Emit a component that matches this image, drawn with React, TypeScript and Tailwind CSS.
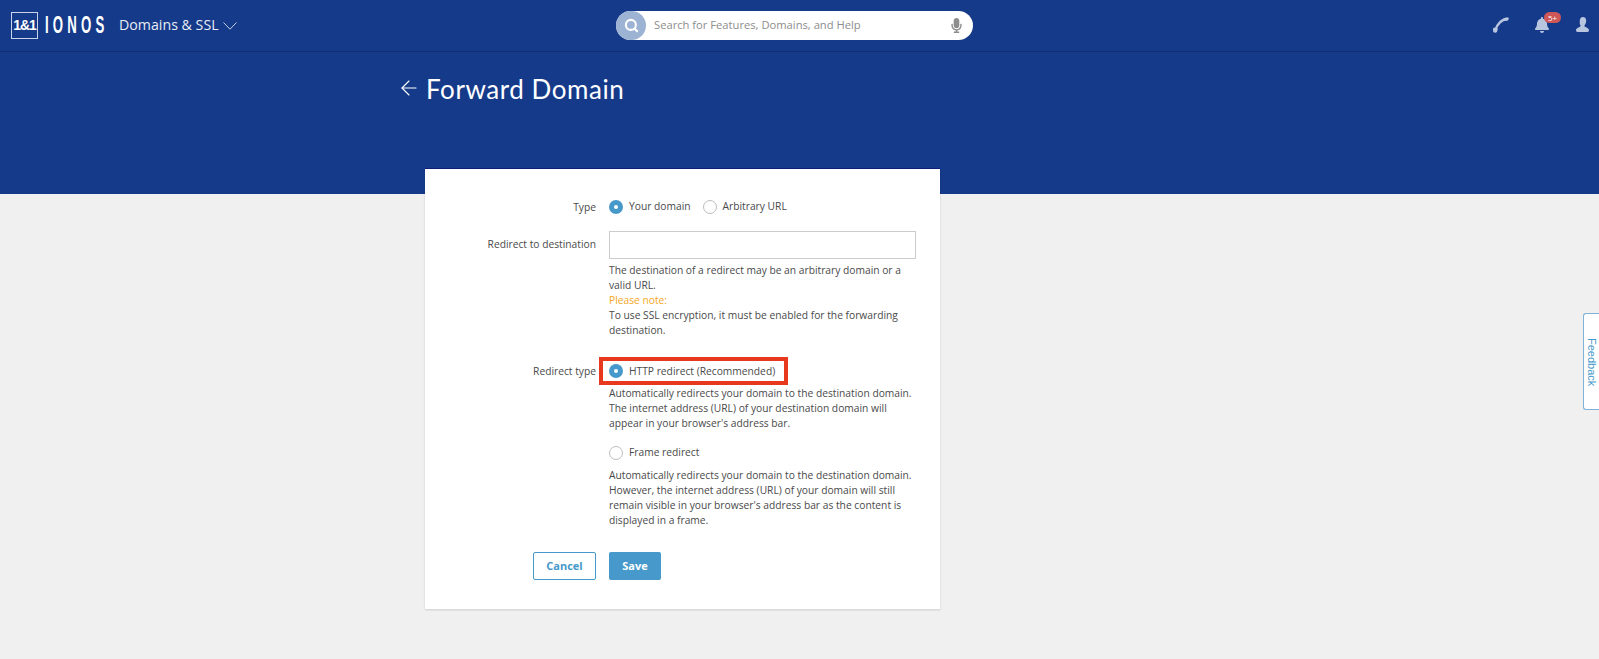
import { ArrowLeft, Search } from "lucide-react";
import { FaBell, FaMicrophone } from "react-icons/fa";

const Radio = ({ checked = false }: { checked?: boolean }) =>
  checked ? (
    <span className="flex h-[14px] w-[14px] shrink-0 items-center justify-center rounded-full bg-[#4699ca]">
      <span className="h-[4px] w-[4px] rounded-full bg-white" />
    </span>
  ) : (
    <span className="block h-[14px] w-[14px] shrink-0 rounded-full border border-[#bdbdbd] bg-white" />
  );

const Header = () => (
  <header className="flex h-[52px] items-center justify-between border-b border-[#112f70] pb-[1px] pl-[11px] pr-[9px]">
    <div className="flex w-[605px] items-center">
      {/* Logo */}
      <span className="flex h-[27px] w-[27px] shrink-0 items-center justify-center border border-[#c9d3e8] font-['Liberation_Sans',sans-serif] text-[14px] font-bold tracking-[-1px] text-white">
        1&amp;1
      </span>
      <span className="ml-[7px] w-[60px] shrink-0 origin-left [transform:scaleX(0.55)] whitespace-nowrap font-['Liberation_Sans',sans-serif] text-[24px] font-bold leading-none tracking-[7.6px] text-white">
        IONOS
      </span>
      <span className="ml-[14px] whitespace-nowrap font-['Open_Sans',sans-serif] text-[14.2px] text-[#e8ecf5]">
        Domains &amp; SSL
      </span>
      <svg viewBox="0 0 14 8" className="ml-[4px] mt-[2px] h-[8px] w-[14px] text-[#c3cde2]" fill="none" stroke="currentColor">
        <path d="M.5.5 7 7.200 13.500.5" />
      </svg>
    </div>

    {/* Search */}
    <div className="flex h-[29px] w-[357px] items-center rounded-full bg-white">
      <span className="flex h-[29px] w-[30px] shrink-0 items-center justify-center rounded-full bg-[#9cb3d3]">
        <Search className="h-[15px] w-[15px] text-white" strokeWidth={3.4} />
      </span>
      <span className="ml-[8px] font-['Open_Sans',sans-serif] text-[11.2px] text-[#8d8d8d]">
        Search for Features, Domains, and Help
      </span>
      <FaMicrophone className="ml-auto mr-[9px] h-[15px] w-[15px] text-[#8d8d8d]" />
    </div>

    <div className="ml-auto flex items-center text-[#b8c6e0]">
      <svg viewBox="0 0 16 16" className="h-[16px] w-[16px]" fill="none" stroke="currentColor">
        <path d="M14.500 2C9 2 3.800 7 2.300 13.500" strokeWidth={2.4} />
        <path d="M10 1.800c1.700-1.100 4.300-1.700 5.400-1.100.700.400.400 2.300-.6 2.800-1.300.5-3 .3-4.300.6z" fill="currentColor" stroke="none" />
        <path d="M.2 11c.9-.9 3.800-.6 4.400.2.300 1-.1 2.800-.7 3.900-.7.900-2.900.9-3.500-.1-.5-1-.4-3-.2-4z" fill="currentColor" stroke="none" />
      </svg>
      <span className="relative ml-[26px] flex h-[16px] w-[14px] items-center justify-center">
        <FaBell className="h-[16px] w-[15px]" />
        <span className="absolute left-[9px] top-[-5px] flex h-[11px] w-[17px] items-center justify-center rounded-full bg-[#cf5757] font-['Open_Sans',sans-serif] text-[8px] leading-none text-white">
          5+
        </span>
      </span>
      <svg viewBox="0 0 14 16" className="ml-[27px] h-[16px] w-[14px]" fill="currentColor">
        <path d="M7 0c2 0 3.200 1.500 3.200 3.700 0 1.800-.7 3.300-1.500 4.200-.4.500-.3 1.400.3 1.800 1.300.8 4 1.300 4 3.600 0 1.200-.7 1.700-1.600 1.700H1.600C.7 15 0 14.500 0 13.300c0-2.300 2.700-2.800 4-3.600.6-.4.700-1.300.3-1.800C3.500 7 3.800 5.500 3.800 3.700 3.800 1.500 5 0 7 0z" />
      </svg>
    </div>
  </header>
);

const Help = ({ children }: { children: React.ReactNode }) => (
  <p className="text-[10.25px] leading-[15px] text-[#4a4a4a]">{children}</p>
);

export default function App() {
  return (
    <div className="relative min-h-[659px] overflow-hidden bg-[#f0f0f0] font-['Open_Sans',sans-serif]">
      <div className="h-[194px] bg-[#163a8a]">
        <Header />
        <div className="ml-[397px] mt-[20px] flex items-center">
          <ArrowLeft className="-mt-[3px] h-[24px] w-[24px] text-white" strokeWidth={1.1} />
          <h1 className="ml-[5px] font-['Lato',sans-serif] text-[26px] font-normal leading-[34px] tracking-[0.55px] text-white">
            Forward Domain
          </h1>
        </div>
      </div>

      {/* Form card */}
      <main className="relative -mt-[26px] ml-[425px] h-[441px] w-[515px] border-t border-[#0b1f78] bg-white pt-[30px] shadow-[0_1px_2px_rgba(0,0,0,0.15)]">
        <div className="grid grid-cols-[171px_307px] gap-x-[13px] text-[10.25px] text-[#4a4a4a]">
          <div className="text-right leading-[16px]">Type</div>
          <div className="flex h-[16px] items-center">
            <Radio checked />
            <span className="ml-[6px]">Your domain</span>
            <span className="ml-[12px]"><Radio /></span>
            <span className="ml-[6px]">Arbitrary URL</span>
          </div>

          <div className="mt-[16px] pt-[6px] text-right leading-[15px]">Redirect to destination</div>
          <div className="mt-[16px]">
            <div className="h-[28px] border border-[#cccccc] bg-white" />
            <div className="mt-[4px]">
              <Help>The destination of a redirect may be an arbitrary domain or a valid URL.</Help>
              <p className="text-[10.25px] leading-[15px] text-[#f5a623]">Please note:</p>
              <Help>To use SSL encryption, it must be enabled for the forwarding destination.</Help>
            </div>
          </div>

          <div className="mt-[19px] pt-[7px] text-right leading-[15px]">Redirect type</div>
          <div className="mt-[19px]">
            <div className="-ml-[10px] flex h-[28px] w-[189px] items-center border-[4px] border-[#e8391f] pl-[6px]">
              <Radio checked />
              <span className="ml-[6px] mt-[1px] whitespace-nowrap">HTTP redirect (Recommended)</span>
            </div>
            <div className="mt-[1px]">
              <Help>
                Automatically redirects your domain to the destination domain. The internet address (URL) of your
                destination domain will appear in your browser's address bar.
              </Help>
            </div>
            <div className="mt-[14px] flex h-[16px] items-center">
              <Radio />
              <span className="ml-[6px]">Frame redirect</span>
            </div>
            <div className="mt-[7px]">
              <Help>
                Automatically redirects your domain to the destination domain. However, the internet address (URL) of
                your domain will still remain visible in your browser's address bar as the content is displayed in a
                frame.
              </Help>
            </div>
          </div>

          <div className="mt-[24px] flex justify-end">
            <button className="h-[28px] w-[63px] rounded-[2px] border border-[#4699ca] bg-white text-[11px] font-bold text-[#4699ca]">
              Cancel
            </button>
          </div>
          <div className="mt-[24px]">
            <button className="h-[28px] w-[52px] rounded-[2px] bg-[#4699ca] text-[11px] font-bold text-white">
              Save
            </button>
          </div>
        </div>
      </main>

      {/* Feedback tab */}
      <div className="absolute right-0 top-[313px] flex h-[97px] w-[16px] items-start justify-center rounded-l-[3px] border border-r-0 border-[#7fb2d6] bg-white">
        <span className="mt-[24px] font-['Liberation_Sans',sans-serif] text-[11px] leading-[14px] text-[#4699ca] [writing-mode:vertical-rl]">
          Feedback
        </span>
      </div>
    </div>
  );
}
